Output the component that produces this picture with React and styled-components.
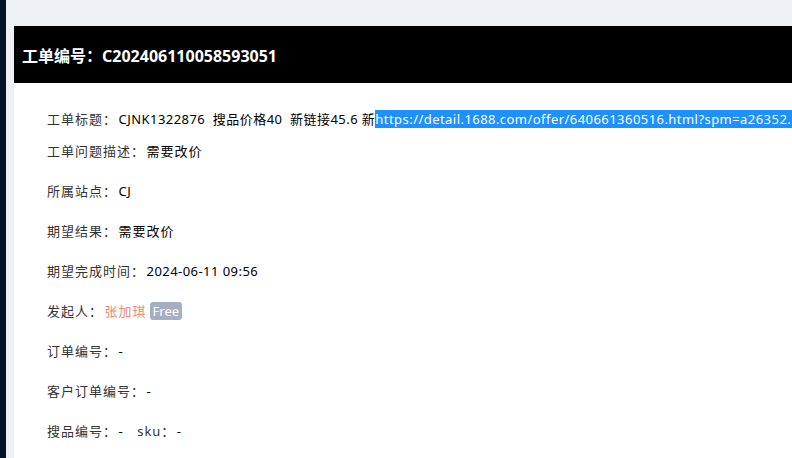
import React from "react";
import styled, { createGlobalStyle } from "styled-components";

const Global = createGlobalStyle`
  html, body { margin: 0; padding: 0; }
  body {
    font-family: "Noto Sans", "Noto Sans CJK SC", sans-serif;
    background: #ffffff;
    overflow: hidden;
  }
`;

const Shell = styled.div`
  display: flex;
  width: 792px;
  height: 458px;
  overflow: hidden;
`;

const Sider = styled.div`
  width: 6px;
  flex: none;
  background: #001529;
`;

const Main = styled.div`
  flex: 1;
  min-width: 0;
  background: #f0f1f4;
  padding: 26px 0 0 8px;
  overflow: hidden;
`;

const Card = styled.div`
  background: #ffffff;
  min-height: 100%;
`;

const CardHeader = styled.div`
  height: 57px;
  background: #000000;
  color: #ffffff;
  display: flex;
  align-items: center;
  padding-left: 8px;
  font-size: 16px;
  font-weight: 700;
  white-space: nowrap;
`;

const CardBody = styled.div`
  padding: 25px 0 0 33px;
  font-size: 13px;
  line-height: 22px;
  letter-spacing: 0.45px;
`;

const Row = styled.div`
  display: flex;
  align-items: center;
  white-space: nowrap;
  margin-bottom: ${(p) => (p.$tight ? 10 : 18)}px;
`;

const Label = styled.span`
  color: #333333;
  letter-spacing: 1px;
  font-feature-settings: "halt";
  margin-right: 8px;
`;

const Value = styled.span`
  color: #000000;
  letter-spacing: ${(p) => (p.$cjk ? "1px" : "inherit")};
  margin-right: ${(p) => (p.$gap ? 14 : 0)}px;
`;

const Selected = styled.span`
  background: #1e90ff;
  color: #ffffff;
`;

const Person = styled.span`
  color: #ee8a6f;
  letter-spacing: 1px;
  margin-right: 3px;
`;

const Tag = styled.span`
  display: inline-block;
  background: #a5afc2;
  color: #ffffff;
  border-radius: 3px;
  padding: 0 3px;
  line-height: 18px;
  letter-spacing: 0;
`;

export default function App() {
  return (
    <>
      <Global />
      <Shell>
        <Sider />
        <Main>
          <Card>
            <CardHeader>工单编号：C202406110058593051</CardHeader>
            <CardBody>
              <Row $tight>
                <Label>工单标题：</Label>
                <Value>
                  CJNK1322876&nbsp; 搜品价格40&nbsp; 新链接45.6 新
                  <Selected>https://detail.1688.com/offer/640661360516.html?spm=a26352.b28411319.offerlist.1.3d9a1e62abcdef</Selected>
                </Value>
              </Row>
              <Row>
                <Label>工单问题描述：</Label>
                <Value $cjk>需要改价</Value>
              </Row>
              <Row>
                <Label>所属站点：</Label>
                <Value>CJ</Value>
              </Row>
              <Row>
                <Label>期望结果：</Label>
                <Value $cjk>需要改价</Value>
              </Row>
              <Row>
                <Label>期望完成时间：</Label>
                <Value>2024-06-11 09:56</Value>
              </Row>
              <Row>
                <Label>发起人：</Label>
                <Person>张加琪</Person>
                <Tag>Free</Tag>
              </Row>
              <Row>
                <Label>订单编号：</Label>
                <Value>-</Value>
              </Row>
              <Row>
                <Label>客户订单编号：</Label>
                <Value>-</Value>
              </Row>
              <Row>
                <Label>搜品编号：</Label>
                <Value $gap>-</Value>
                <Label>sku：</Label>
                <Value>-</Value>
              </Row>
            </CardBody>
          </Card>
        </Main>
      </Shell>
    </>
  );
}
